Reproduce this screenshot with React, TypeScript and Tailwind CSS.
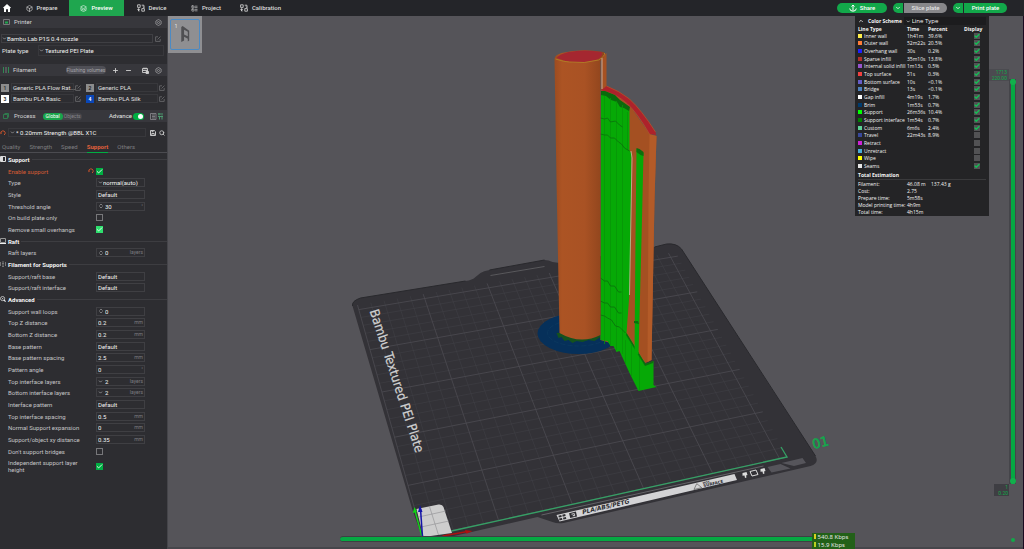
import type { ReactNode } from "react";
import {
  Box,
  Check,
  ChevronDown,
  ChevronUp,
  ChevronsUpDown,
  Layers,
  LayoutList,
  Minus,
  Plus,
  Search,
} from "lucide-react";
import clsx from "clsx";

type Field = {
  label: string;
  kind: "select" | "number" | "spin" | "combo" | "check";
  value?: string;
  unit?: string;
  checked?: boolean;
  bright?: boolean;
  changed?: boolean;
  arrow?: boolean;
  tall?: boolean;
};

const sections: { title: string; icon: ReactNode; fields: Field[] }[] = [
  {
    title: "Support",
    icon: (
      <svg viewBox="0 0 6 6" className="size-[6px]">
        <path d="M.5.5h5v5h-5z" fill="none" stroke="#ddd" />
        <path d="M1 1h2v4H1z" fill="#ddd" />
      </svg>
    ),
    fields: [
      { label: "Enable support", kind: "check", checked: true, changed: true },
      { label: "Type", kind: "select", value: "normal(auto)", arrow: true },
      { label: "Style", kind: "select", value: "Default" },
      { label: "Threshold angle", kind: "spin", value: "30", unit: "°" },
      { label: "On build plate only", kind: "check" },
      { label: "Remove small overhangs", kind: "check", checked: true, bright: true },
    ],
  },
  {
    title: "Raft",
    icon: (
      <svg viewBox="0 0 6 6" className="size-[6px]">
        <path d="M.5 .5h5v4h-5z" fill="none" stroke="#999" />
        <path d="M0 5.5h6" stroke="#eee" />
      </svg>
    ),
    fields: [{ label: "Raft layers", kind: "spin", value: "0", unit: "layers" }],
  },
  {
    title: "Filament for Supports",
    icon: (
      <svg viewBox="0 0 6 6" className="size-[6px]">
        <path d="M.5 1v4M5.5 1v4M2 1h2M2 2.5h2M2 4h2M2 5.5h2" stroke="#888" strokeWidth=".8" />
      </svg>
    ),
    fields: [
      { label: "Support/raft base", kind: "select", value: "Default" },
      { label: "Support/raft interface", kind: "select", value: "Default" },
    ],
  },
  {
    title: "Advanced",
    icon: (
      <svg viewBox="0 0 7 7" className="size-[6px]">
        <circle cx="3" cy="3" r="2.4" fill="none" stroke="#ccc" />
        <circle cx="3" cy="3" r=".8" fill="#ccc" />
        <path d="M4.5 4.5L6.5 6.5" stroke="#eee" strokeWidth="1.4" />
      </svg>
    ),
    fields: [
      { label: "Support wall loops", kind: "spin", value: "0" },
      { label: "Top Z distance", kind: "number", value: "0.2", unit: "mm" },
      { label: "Bottom Z distance", kind: "number", value: "0.2", unit: "mm" },
      { label: "Base pattern", kind: "select", value: "Default" },
      { label: "Base pattern spacing", kind: "number", value: "2.5", unit: "mm" },
      { label: "Pattern angle", kind: "number", value: "0", unit: "°" },
      { label: "Top interface layers", kind: "combo", value: "2", unit: "layers" },
      { label: "Bottom interface layers", kind: "combo", value: "2", unit: "layers" },
      { label: "Interface pattern", kind: "select", value: "Default" },
      { label: "Top interface spacing", kind: "number", value: "0.5", unit: "mm" },
      { label: "Normal Support expansion", kind: "number", value: "0", unit: "mm" },
      { label: "Support/object xy distance", kind: "number", value: "0.35", unit: "mm" },
      { label: "Don't support bridges", kind: "check" },
      { label: "Independent support layer height", kind: "check", checked: true, tall: true },
    ],
  },
];

const lineTypes = [
  { name: "Inner wall", color: "#ffee4a", time: "1h41m", percent: "39.6%", shown: true },
  { name: "Outer wall", color: "#ff7c38", time: "52m22s", percent: "20.5%", shown: true },
  { name: "Overhang wall", color: "#1f1fff", time: "30s", percent: "0.2%", shown: true },
  { name: "Sparse infill", color: "#b03029", time: "35m10s", percent: "13.8%", shown: true },
  { name: "Internal solid infill", color: "#9654cc", time: "1m13s", percent: "0.5%", shown: true },
  { name: "Top surface", color: "#f04040", time: "51s", percent: "0.3%", shown: true },
  { name: "Bottom surface", color: "#665cc7", time: "10s", percent: "<0.1%", shown: true },
  { name: "Bridge", color: "#4d80ba", time: "13s", percent: "<0.1%", shown: true },
  { name: "Gap infill", color: "#ffffff", time: "4m19s", percent: "1.7%", shown: true },
  { name: "Brim", color: "#003b6e", time: "1m53s", percent: "0.7%", shown: true },
  { name: "Support", color: "#00ff00", time: "26m36s", percent: "10.4%", shown: true },
  { name: "Support interface", color: "#008000", time: "1m54s", percent: "0.7%", shown: true },
  { name: "Custom", color: "#5ed194", time: "6m6s", percent: "2.4%", shown: true },
  { name: "Travel", color: "#38489b", time: "22m43s", percent: "8.9%", shown: false },
  { name: "Retract", color: "#cd22d6", time: "", percent: "", shown: false },
  { name: "Unretract", color: "#49add8", time: "", percent: "", shown: false },
  { name: "Wipe", color: "#ffff00", time: "", percent: "", shown: false },
  { name: "Seams", color: "#e6e6e6", time: "", percent: "", shown: true },
];

const totals = [
  ["Filament:", "46.08 m", "137.43 g"],
  ["Cost:", "2.75", ""],
  ["Prepare time:", "5m58s", ""],
  ["Model printing time:", "4h9m", ""],
  ["Total time:", "4h15m", ""],
];

const filaments = [
  { id: 1, name: "Generic PLA Flow Rat...", swatch: "bg-[#8c8c8c] text-[#333]" },
  { id: 2, name: "Generic PLA", swatch: "bg-[#8c8c8c] text-[#222]" },
  { id: 3, name: "Bambu PLA Basic", swatch: "bg-white text-[#333]" },
  { id: 4, name: "Bambu PLA Silk", swatch: "bg-[#0a47b8] text-white" },
];

const UndoIcon = ({ className }: { className?: string }) => (
  <svg viewBox="0 0 6 6" className={clsx("size-[6px] text-[#c9532d]", className)} fill="none" stroke="currentColor">
    <path d="M.8 3.200A2.200 2.200 0 1 1 4 5" />
    <path d="M0 2.500l.8 1.300L2 2.800" strokeWidth=".7" />
  </svg>
);

const GearIcon = () => (
  <svg viewBox="0 0 7 7" className="mr-[2px] size-[7px]" fill="none" stroke="#99999c" strokeWidth=".8">
    <path d="M3.500.5l2.600 1.500v3L3.500 6.500.9 5V2z" />
    <circle cx="3.500" cy="3.500" r="1" />
  </svg>
);

const EditIcon = () => (
  <svg viewBox="0 0 6 6" className="size-[6px] shrink-0" fill="none" stroke="#77777a" strokeWidth=".7">
    <path d="M3 .8H.6v4.600h4.600V3M2.500 3.500L5.400.6" />
  </svg>
);

const DiskIcon = () => (
  <svg viewBox="0 0 6 6" className="size-[6px]" fill="none" stroke="#d6d6d6" strokeWidth=".9">
    <path d="M.5.5h3.800l1.200 1.200v3.800h-5z" />
    <path d="M1.800 5.500v-2h2.400v2M2 .7v1h1.500" />
  </svg>
);

// two rounded devices joined by arrows
const DeviceIcon = () => (
  <svg viewBox="0 0 8 8" className="size-[8px]" fill="none" stroke="currentColor" strokeWidth=".8">
    <path d="M.6.8h2.600v2.600H.6zM4.800 4.600h2.600v2.600H4.800z" />
    <path d="M4.700 1.200h2.200v2.300M6 2.700l.9.9.8-.9M2.500 7H1.500V5" />
    <circle cx="1.600" cy="5.500" r=".8" />
  </svg>
);

const Header = () => {
  const tabs = [
    { name: "Prepare", icon: <Box className="size-[7px]" />, width: "w-[55px]" },
    { name: "Preview", icon: <Layers className="size-[7px]" />, width: "w-[55px]", active: true },
    { name: "Device", icon: <DeviceIcon />, width: "w-[55px]" },
    { name: "Project", icon: <LayoutList className="size-[7px]" />, width: "w-[54px]" },
    { name: "Calibration", icon: <DeviceIcon />, width: "w-[55px]" },
  ];
  return (
    <header className="flex h-4 items-center bg-[#242529] pr-[17px] text-[#dcdcdc]">
      <a href="#home" aria-label="Home" className="flex w-[14px] justify-center">
        <svg viewBox="0 0 8 8" className="size-[8px]" fill="#fff">
          <path d="M4 0L0 3.7l.6.6L1 4v4h2V5.3h2V8h2V4l.4.3.6-.6z" />
        </svg>
      </a>
      <nav className="flex h-full">
        {tabs.map(({ name, icon, width, active }) => (
          <button
            key={name}
            className={clsx(
              "flex h-full items-center justify-center gap-[4px] font-medium",
              width,
              active && "bg-[#1fa64f] text-white",
            )}
          >
            {icon}
            {name}
          </button>
        ))}
      </nav>
      <div className="ml-auto flex items-center gap-[6px] font-medium text-white">
        <button className="flex h-[10px] w-[50px] items-center justify-center gap-[3px] rounded-full bg-[#12a84a]">
          <svg viewBox="0 0 8 8" className="size-[8px]" fill="none" stroke="#fff">
            <path d="M4 6.500V1M2.500 2.500L4 1l1.500 1.500M.7 4.500Q1 7.200 4 7.200T7.300 4.500" />
          </svg>
          Share
        </button>
        <div className="flex gap-px">
          <button aria-label="Slice options" className="flex h-[10px] w-[10px] items-center justify-center rounded-l-full bg-[#12a84a]">
            <ChevronDown className="size-[6px]" strokeWidth={3} />
          </button>
          <button className="h-[10px] w-[43px] rounded-r-full bg-[#87878a] leading-[10px] text-[#e4e4e4]">
            Slice plate
          </button>
        </div>
        <div className="flex gap-px">
          <button aria-label="Print options" className="flex h-[10px] w-[10px] items-center justify-center rounded-l-full bg-[#12a84a]">
            <ChevronDown className="size-[6px]" strokeWidth={3} />
          </button>
          <button className="h-[10px] w-[43px] rounded-r-full bg-[#12a84a] leading-[10px]">
            Print plate
          </button>
        </div>
      </div>
    </header>
  );
};

const Bar = ({ children }: { children: ReactNode }) => (
  <div className="flex h-3 shrink-0 items-center bg-[#37373c] px-[3px] text-[#d4d4d4]">{children}</div>
);

const fieldBox = "flex h-[9px] items-center border border-[#3f3f43] text-[#f2f2f2]";

const FieldControl = ({ field, id }: { field: Field; id: string }) => {
  if (field.kind === "check") {
    return (
      <div className="relative size-[7px]">
        <input
          id={id}
          type="checkbox"
          defaultChecked={field.checked}
          className={clsx(
            "block size-[7px] appearance-none border",
            field.checked
              ? field.bright
                ? "border-[#2ee06e] bg-[#2ee06e]"
                : "border-[#00ae42] bg-[#00ae42]"
              : "border-[#77777a]",
          )}
        />
        {field.checked && (
          <Check className="pointer-events-none absolute inset-0 size-[7px] text-white" strokeWidth={3} />
        )}
        {field.changed && <UndoIcon className="absolute top-0 -left-[8px]" />}
      </div>
    );
  }
  if (field.kind === "select") {
    return (
      <div className={clsx(fieldBox, "pl-px")}>
        {field.arrow && <ChevronDown className="size-[5px] shrink-0 text-[#bbb]" strokeWidth={3} />}
        <select id={id} className="w-full appearance-none bg-transparent leading-[7px] outline-none">
          <option>{field.value}</option>
        </select>
      </div>
    );
  }
  return (
    <div className={clsx(fieldBox, "pr-px pl-px")}>
      {field.kind === "spin" && (
        <ChevronsUpDown className="mr-px size-[6px] shrink-0 text-[#999]" strokeWidth={3} />
      )}
      {field.kind === "combo" && (
        <ChevronDown className="mr-[2px] size-[5px] shrink-0 text-[#bbb]" strokeWidth={3} />
      )}
      <input
        id={id}
        type="text"
        defaultValue={field.value}
        className="w-0 min-w-0 flex-1 bg-transparent leading-[7px] outline-none"
      />
      <span className="text-[5px] leading-[7px] text-[#7c7c80]">{field.unit}</span>
    </div>
  );
};

const Sidebar = () => (
  <aside className="flex w-[168px] shrink-0 flex-col border-r border-[#45454a] bg-[#2d2d31] text-[#c4c4c6]">
    <Bar>
      <svg viewBox="0 0 7 6" className="mr-[4px] h-[6px] w-[7px]" fill="none" stroke="#77777a">
        <path d="M.5.5h6v5h-6z" />
        <path d="M2 3.500h3" stroke="#1fa64f" strokeWidth="2" />
      </svg>
      <h2 className="mr-auto">Printer</h2>
      <GearIcon />
    </Bar>
    <div className="mt-[6px] flex items-center gap-[2px] pl-px">
      <div className={clsx(fieldBox, "w-[152px]")}>
        <ChevronDown className="size-[5px] shrink-0 text-[#bbb]" strokeWidth={3} />
        <select aria-label="Printer preset" className="w-full appearance-none leading-[7px]">
          <option>Bambu Lab P1S 0.4 nozzle</option>
        </select>
      </div>
      <EditIcon />
    </div>
    <div className="mt-[2px] flex items-center pl-[2px]">
      <label htmlFor="plate" className="w-[36px] text-[#e6e6e6]">
        Plate type
      </label>
      <div className="flex h-[11px] w-[126px] items-center border border-[#38383c] text-[#f2f2f2]">
        <ChevronDown className="mr-px size-[5px] shrink-0 text-[#bbb]" strokeWidth={3} />
        <select id="plate" className="w-full appearance-none leading-[7px]">
          <option>Textured PEI Plate</option>
        </select>
      </div>
    </div>

    <div className="mt-[8px]">
      <Bar>
        <svg viewBox="0 0 6 6" className="mr-[4px] size-[6px]" fill="none" stroke="#2f8a52">
          <path d="M.5 0v6M5.500 0v6" />
          <path d="M2 1h2M2 3h2M2 5h2" stroke="#77777a" />
        </svg>
        <h2>Filament</h2>
        <button className="ml-auto h-[8px] w-[40px] rounded-full bg-[#505057] text-[5px] leading-[8px] whitespace-nowrap text-[#a5a5aa]">
          Flushing volumes
        </button>
        <button aria-label="Add filament" className="ml-[6px]">
          <Plus className="size-[7px]" strokeWidth={3} />
        </button>
        <button aria-label="Remove filament" className="ml-[6px]">
          <Minus className="size-[7px]" strokeWidth={3} />
        </button>
        <svg viewBox="0 0 7 7" className="mr-[6px] ml-[10px] size-[7px]" fill="none" stroke="#cfcfcf" strokeWidth=".9">
          <path d="M.5 1.500h5v4h-5zM.5 3.500h5M2 .5v2M4 .5v2" />
          <path d="M4 4.500h2.500v2H4z" fill="#cfcfcf" />
        </svg>
        <GearIcon />
      </Bar>
    </div>
    <div className="mt-[6px] grid grid-cols-[80px_79px] gap-x-[5px] pl-px">
      {filaments.map(({ id, name, swatch }) => (
        <div key={id} className="flex h-[11px] items-center text-[#e0e0e0]">
          <span className={clsx("size-[8px] text-center text-[5px] leading-[8px] font-bold", swatch)}>{id}</span>
          <button className="mr-px ml-[2px] h-[9px] min-w-0 flex-1 border border-[#38383c] pl-px text-left leading-[7px] whitespace-nowrap">
            {name}
          </button>
          <EditIcon />
        </div>
      ))}
    </div>

    <div className="mt-[6px]">
      <Bar>
        <svg viewBox="0 0 6 6" className="mr-[5px] size-[6px]" fill="none" stroke="#2f8a52" strokeWidth=".8">
          <path d="M1.500 .5h4v4M.5 1.500h4v4h-4z" />
        </svg>
        <h2>Process</h2>
        <div className="ml-[7px] flex rounded-full bg-[#45454a] text-[#85858a]">
          <button className="h-[7px] w-[20px] rounded-full bg-[#18a54b] text-[5px] leading-[7px] text-white">
            Global
          </button>
          <button className="h-[7px] w-[19px] text-[5px] leading-[7px]">Objects</button>
        </div>
        <label htmlFor="advance" className="ml-auto text-[#e6e6e6]">
          Advance
        </label>
        <div className="relative ml-px h-[7px] w-[11px]">
          <input
            id="advance"
            type="checkbox"
            role="switch"
            defaultChecked
            className="block h-[7px] w-[11px] appearance-none rounded-full bg-[#00ae42]"
          />
          <span className="pointer-events-none absolute top-px right-px size-[5px] rounded-full bg-white" />
        </div>
        <svg viewBox="0 0 14 7" className="ml-[6px] h-[7px] w-[14px]" fill="none" stroke="#8c8c90" strokeWidth=".8">
          <path d="M.5.5h5.500v6H.5zM2 2h3M2 3.500h3M2 5h3" />
          <path d="M8 1h5M8 3.500h5M9 0v2.500M12 2.500V6.500M9.500 3.500v3" stroke="#4f9b70" strokeWidth="1" />
        </svg>
      </Bar>
    </div>
    <div className="mt-[6px] flex items-center">
      <UndoIcon className="mr-[2px]" />
      <div className={clsx(fieldBox, "w-[138px] border-[#38383c]")}>
        <ChevronDown className="mx-px size-[5px] shrink-0 text-[#bbb]" strokeWidth={3} />
        <select aria-label="Process preset" className="w-full appearance-none leading-[7px]">
          <option>* 0.20mm Strength @BBL X1C</option>
        </select>
      </div>
      <span className="mr-[3px] ml-[4px]">
        <DiskIcon />
      </span>
      <Search className="size-[6px] text-[#ddd]" strokeWidth={3} />
    </div>
    <div role="tablist" className="mt-[5px] flex h-[11px] gap-[9px] border-b border-[#4b4b50] pl-[2px] text-[#7d7d80]">
      {["Quality", "Strength", "Speed", "Support", "Others"].map((name) => (
        <button
          key={name}
          role="tab"
          aria-selected={name === "Support"}
          className={clsx(
            "h-[11px] border-b leading-[10px]",
            name === "Support" ? "border-[#00ae42] font-bold text-[#e0603c]" : "border-transparent",
          )}
        >
          {name}
        </button>
      ))}
    </div>

    <form className="flex flex-col">
      {sections.map(({ title, icon, fields }) => [
        <h3
          key={title}
          className="flex h-3 items-center gap-[2px] leading-[7px] font-bold text-[#f4f4f4] nth-[3n]:h-[11px]"
        >
          {icon}
          {title}
          <span className="h-px flex-1 bg-[#3d3d41]" />
        </h3>,
        ...fields.map((field) => {
          const id = field.label.toLowerCase().replace(/\W+/g, "-");
          return (
            <div
              key={id}
              className={clsx(
                "grid grid-cols-[88px_49px] items-center pl-[8px]",
                field.tall ? "h-[18px]" : "h-3 nth-[3n]:h-[11px]",
              )}
            >
              <label htmlFor={id} className={clsx("pr-[8px] leading-[7px]", field.changed && "text-[#d65c34]")}>
                {field.label}
              </label>
              <FieldControl field={field} id={id} />
            </div>
          );
        }),
      ])}
    </form>
  </aside>
);

const Legend = () => (
  <section className="h-[200px] w-[134px] bg-[#242426] px-[3px] font-['Open_Sans','Liberation_Sans',sans-serif] text-[5px] leading-[6px] font-medium text-[#f4f4f4]">
    <div className="flex h-[10px] items-center">
      <ChevronUp className="mr-[4px] size-[6px]" strokeWidth={3} />
      <label htmlFor="scheme" className="w-[36px] font-bold whitespace-nowrap">
        Color Scheme
      </label>
      <div className="flex h-[8px] flex-1 items-center bg-[#1c1c1e] pl-[2px]">
        <ChevronDown className="mr-px size-[5px]" strokeWidth={3} />
        <select id="scheme" className="w-full appearance-none text-[6px] leading-[7px]">
          <option>Line Type</option>
        </select>
      </div>
    </div>
    <table className="h-[144px] w-full table-fixed text-left whitespace-nowrap">
      <thead>
        <tr className="font-bold">
          <th className="w-[49px]">Line Type</th>
          <th className="w-[21px]">Time</th>
          <th className="w-[36px]">Percent</th>
          <th>Display</th>
        </tr>
      </thead>
      <tbody>
        {lineTypes.map(({ name, color, time, percent, shown }) => (
          <tr key={name}>
            <td>
              <span className="flex items-center gap-[2px]">
                <span className="size-[4px]" style={{ backgroundColor: color }} />
                {name}
              </span>
            </td>
            <td>{time}</td>
            <td>{percent}</td>
            <td>
              <div className="relative ml-[10px] size-[6px]">
                <input
                  type="checkbox"
                  aria-label={`Display ${name}`}
                  defaultChecked={shown}
                  className="block size-[6px] appearance-none bg-[#525254]"
                />
                {shown && (
                  <Check className="pointer-events-none absolute inset-0 size-[6px] text-[#12c254]" strokeWidth={5} />
                )}
              </div>
            </td>
          </tr>
        ))}
      </tbody>
    </table>
    <h3 className="mt-px border-b border-[#3a3a3c] leading-[8px] font-bold">Total Estimation</h3>
    <table className="w-full table-fixed text-left whitespace-nowrap">
      <tbody>
        {totals.map(([name, value, extra]) => (
          <tr key={name} className="h-[7px]">
            <th className="w-[49px] font-medium">{name}</th>
            <td className="w-[24px]">{value}</td>
            <td>{extra}</td>
          </tr>
        ))}
      </tbody>
    </table>
  </section>
);

// Screen corners of the 256 mm bed: origin, +x, +x+y, +y
const bed = [
  [423, 537],
  [788, 457],
  [676, 252],
  [358, 305],
];

const project = (x: number, y: number) => {
  const [[x0, y0], [x1, y1], [x2, y2], [x3, y3]] = bed;
  const u = x / 256;
  const v = y / 256;
  const dx1 = x1 - x2;
  const dx2 = x3 - x2;
  const dx3 = x0 - x1 + x2 - x3;
  const dy1 = y1 - y2;
  const dy2 = y3 - y2;
  const dy3 = y0 - y1 + y2 - y3;
  const det = dx1 * dy2 - dx2 * dy1;
  const g = (dx3 * dy2 - dx2 * dy3) / det;
  const h = (dx1 * dy3 - dx3 * dy1) / det;
  const w = g * u + h * v + 1;
  const px = ((x1 - x0 + g * x1) * u + (x3 - x0 + h * x3) * v + x0) / w;
  const py = ((y1 - y0 + g * y1) * u + (y3 - y0 + h * y3) * v + y0) / w;
  return `${px.toFixed(1)} ${py.toFixed(1)}`;
};

const gridPath = (bold: boolean) => {
  let d = "";
  for (let i = 0; i <= 250; i += 10) {
    if ((i % 50 === 0) !== bold) continue;
    d += `M${project(i, 0)}L${project(i, 256)}M${project(0, i)}L${project(256, i)}`;
  }
  return d;
};

const Scene = () => (
  <svg
    viewBox="168 16 856 533"
    preserveAspectRatio="xMidYMid slice"
    className="absolute inset-0 size-full"
    aria-label="Sliced model on build plate"
  >
    <defs>
      <linearGradient id="tube" x1="0" x2="1">
        <stop offset="0" stopColor="#9c4c20" />
        <stop offset=".15" stopColor="#ac5424" />
        <stop offset=".6" stopColor="#a95224" />
        <stop offset="1" stopColor="#8c431c" />
      </linearGradient>
    </defs>

    {/* plate */}
    <path
      d="M353 306Q352 301 361 298L466 281Q473 280 476 277L481 273Q484 271 490 270L545 260Q549 260 553 262L560 263L655 247L667 244Q677 243 682 249L773 390L816 456Q820 463 811 466L564 523Q558 524 553 522L538 517L450 537L423 538L413 510Z"
      fill="#333237"
    />
    <path d="M353 306Q352 301 361 298L466 281M490 270L545 260M655 247L667 244Q677 243 682 249L816 456" fill="none" stroke="#29292d" />
    <path d="M491 275.500L545 266.500" stroke="#68686c" strokeWidth=".7" />
    <path d={gridPath(false)} fill="none" stroke="#434248" strokeWidth=".5" />
    <path d={gridPath(true)} fill="none" stroke="#4d4b52" strokeWidth=".8" />
    <text
      transform="translate(370 311) rotate(72)"
      fill="#d0d0d0"
      stroke="#d0d0d0"
      strokeWidth=".2"
      fontSize="13"
      fontFamily="'DejaVu Sans Condensed', 'DejaVu Sans', sans-serif"
    >
      Bambu Textured PEI Plate
    </text>
    <path d="M452 531L787.500 457L781.500 447" fill="none" stroke="#35a065" strokeWidth="1.300" />
    <path d="M542 515L764 466" stroke="#858588" strokeWidth=".6" />
    <path d="M557 515L735 474L737.500 480L560 521.500Z" fill="#d3d3d5" />
    <g transform="translate(560 520.500) rotate(-13)" fill="#2d2d31">
      <path d="M0-5h3v2H0zM4-5h3v2H4zM0-2h3v2H0zM4-2h3v2H4z" />
      <path d="M11-5h7v5h-7z" />
      <path d="M13-3.500h3v2h-2M14-2.500l2 1.500" fill="none" stroke="#d3d3d5" strokeWidth=".8" />
      <text x="24" y="-1" fontSize="6" fontWeight="bold" fontStyle="italic" fontFamily="'DejaVu Sans', sans-serif">
        PLA/ABS/PETG
      </text>
      <path d="M138 0l4-5 4 5z" fill="none" stroke="#555" strokeWidth=".6" />
      <text x="148" y="-3" fontSize="3" fontWeight="bold" fontFamily="'DejaVu Sans', sans-serif">
        HOT
      </text>
      <text x="148" y="0" fontSize="4" fontWeight="bold" fontFamily="'DejaVu Sans', sans-serif">
        SURFACE
      </text>
    </g>
    <path d="M743 473l4-1 1 3-1.500.5.5 2-1.500.5-.5-2.500-2 .2zM761 469l4-1 1 3-1.500.5.5 2-1.500.5-.5-2.500-2 .2z" fill="#ddd" />
    <path d="M750.500 471.500l6-1.500 2 4.500-6 1.500z" fill="none" stroke="#ddd" />
    <path d="M768 467l13-3 10 4.500-19 4zM782 463l21-5 3.500 5-12 3z" fill="#56555b" />
    <text
      transform="translate(814 449) rotate(-14)"
      fill="#13a84c"
      stroke="#13a84c"
      strokeWidth=".6"
      fontSize="13"
      fontFamily="'DejaVu Sans', sans-serif"
    >
      01
    </text>

    {/* origin patch and axes */}
    <path d="M417 509L439 504.500Q443 504 444 507L452.500 533L424 537Z" fill="#cdcdcd" />
    <path d="M430 506.500L439 535M419 517L446.500 511M421.500 527L449.500 521" stroke="#8d8d90" strokeWidth=".6" fill="none" />
    <path d="M422.500 537L415.500 511" stroke="#0fd514" strokeWidth="1.300" />
    <path d="M415 507l-1.800 6 4.300-1z" fill="#0fd514" />
    <path d="M423 537L421 509" stroke="#1414a8" strokeWidth="1.500" />
    <path d="M420.500 505l-2 7h4.500z" fill="#1414a8" />
    <path d="M443 536L468 531.500" stroke="#b01010" strokeWidth="1.300" />
    <path d="M473 531l-7.500-1 1.500 3.800z" fill="#b01010" />

    {/* brim */}
    <ellipse cx="579" cy="333.500" rx="41" ry="20.500" fill="#06305a" />
    <ellipse cx="579" cy="333" rx="31" ry="13" fill="none" stroke="#0d3d62" strokeWidth=".6" strokeDasharray="5 2" />
    <path d="M557 333l2 5 3-1 3 4 4-1 4 3 4-2 6 1 6-2 6 1 6-4-2-6z" fill="#14521e" />

    {/* wall */}
    <path d="M602 90L612 92L622 99L632 108L650 134L657 136L655 200L652 360L646 363L634 350L601 340Z" fill="#a45022" />
    <path d="M650 134L657 136L655 200L652 360L648 362L649 200Z" fill="#b35b28" />
    <path d="M602 91L602 88L607 86Q620 91 630 99Q642 110 656 132L656.500 135L650 134Q637 112 628 104Q616 93 602 91Z" fill="#ad222b" />
    <path d="M602 91Q616 93 628 104Q637 112 650 134M607 86Q620 91 630 99Q642 110 656 132" fill="none" stroke="#b5502a" strokeWidth=".8" />

    {/* supports */}
    <path
      d="M601.500 91L608 95L614 98L619 102L630 109L630 150L632 154L631 240L630 293L627 333L646 364L654 361L654 385L657 387L639 391L630 373L620 351L617 352L614 346L611 346L608 341L601 340Z"
      fill="#06a906"
    />
    <path d="M601.500 91l4 0 5 2 5 2 5 5 10 7-1 4-5-3-4-1-3-5-6-2-5-4-5-1z" fill="#0a6a0c" />
    <path
      d="M605 96V344M611 98V346M617 101V350M623 105V354M628 112V150M626 340V364M632 345V376M640 356V390"
      fill="none"
      stroke="#079607"
      strokeWidth=".8"
    />
    <path
      d="M601 118l4 1 3-1 3 4 5-1 4 4 3 2M601 134l4 1 3 0 3 3 4 0 4 4 3 2 3 4 5 3M601 278l4 3 3 0 3 5 4 0 4 6 3 0M601 301l4 2 3 0 3 4 4 0 4 6 3 0M601 315l4 1 3 2 4 2 4 6 4 1 6 6"
      fill="none"
      stroke="#0b6e0d"
      strokeWidth=".8"
    />
    <path d="M627 333l19 31 8-3-.5 2-8 3-19-31z" fill="#0b6e0d" />
    <path d="M631.500 151L632.500 158L631 240L630 295" fill="none" stroke="#d7c9b8" strokeWidth=".7" />
    <path d="M637 149L644 153L642 240L639 354L635 354L636 240Z" fill="#06a906" />
    <path d="M637 148l3 1 4 3v4l-3-1-4-3zM634.500 321l4 0 1 3-5-1z" fill="#0b6e0d" />

    {/* tube */}
    <path d="M602 58L607 53V86L602 90Z" fill="#a65122" />
    <path d="M555 59Q555 55 562 53Q582 48 604 52Q608 54 601 61L601 335Q581 345 560 333L557 180Z" fill="url(#tube)" />
    <path d="M557 58Q560 54 569 52Q585 49 602 52Q604 55 599 59Q583 65 566 61Z" fill="#a52730" />
    <path d="M556 59Q565 62 570 62Q585 64 599 60Q606 56 605 53" fill="none" stroke="#b07a26" />
    <path d="M602.500 58V89" stroke="#d5c3b5" strokeWidth=".8" />
  </svg>
);

const Viewport = () => (
  <main className="relative flex min-w-0 flex-1 flex-col overflow-hidden border-r border-[#1a0a20] bg-[#555459]">
    <Scene />
    <div className="relative flex flex-1">
      <button aria-label="Plate 1" className="h-[37px] w-[34px] bg-[#8f8f92] p-[2px]">
        <span className="block h-[31px] w-[30px] rounded-[2px] border border-[#4b8ac4]">
          <svg viewBox="0 0 30 30" className="size-full">
            <text x="4" y="8" fontSize="5" fill="#eee">
              1
            </text>
            <path d="M11 7v16l3-1.500v-4l4 2v3l1.500-1V11L12.500 6zM14 10l4 2v5l-4-2z" fill="#4f4f52" fillRule="evenodd" />
          </svg>
        </span>
      </button>
      <div className="ml-auto">
        <Legend />
      </div>
      {/* layer range */}
      <div className="mt-[53px] mb-[37px] flex w-[20px] flex-col justify-between text-right text-[5px] leading-[6px] text-[#12a84a]">
        <output className="bg-[#4b4b50] pr-[2px] pl-px">
          1713
          <br />
          220.00
        </output>
        <output className="ml-[5px] bg-[#3e3e43] pr-px">
          1
          <br />
          0.20
        </output>
      </div>
      <div className="relative mt-[63px] mr-[7px] mb-[49px] flex w-[7px] justify-center bg-[#45454a]">
        <input
          type="range"
          aria-label="Layer"
          min="1"
          max="1713"
          defaultValue="1713"
          className="m-0 w-[4px] appearance-none bg-[#06a843] [direction:rtl] [writing-mode:vertical-lr] [&::-webkit-slider-thumb]:size-[4px] [&::-webkit-slider-thumb]:appearance-none [&::-webkit-slider-thumb]:bg-[#06a843]"
        />
        <span className="pointer-events-none absolute top-0 size-[6px] rounded-full bg-[#12b04c]" />
        <span className="pointer-events-none absolute bottom-0 size-[6px] rounded-full bg-[#12b04c]" />
        <span className="pointer-events-none absolute -bottom-[58px] size-[4px] rounded-full bg-[#12a84a]" />
      </div>
    </div>
    {/* move range and network speed */}
    <div className="relative flex h-[16px] items-end border-b-2 border-[#46464b] pl-[172px]">
      <input
        type="range"
        aria-label="Move"
        defaultValue="100"
        className="mb-[5px] h-[6px] min-w-0 flex-1 appearance-none rounded-l-full border-y border-[#3f3f44] bg-[#06a843] [&::-webkit-slider-thumb]:size-[3px] [&::-webkit-slider-thumb]:appearance-none"
      />
      <p className="-mb-[2px] mr-[168px] h-[16px] w-[43px] bg-[#226018] pl-[2px] font-['Noto_Sans'] leading-[8px] whitespace-nowrap text-[#e6e6e6]">
        <span className="inline-block h-[5px] w-[2px] bg-[#d8d020]" /> 540.8 Kbps
        <br />
        <span className="inline-block h-[5px] w-[2px] bg-[#b8d020]" /> 15.9 Kbps
      </p>
    </div>
  </main>
);

export default function App() {
  return (
    <div className="flex min-h-screen flex-col bg-[#2d2d31] font-['Roboto','Liberation_Sans',sans-serif] text-[6px] leading-[8px]">
      <Header />
      <div className="flex flex-1">
        <Sidebar />
        <Viewport />
      </div>
    </div>
  );
}
